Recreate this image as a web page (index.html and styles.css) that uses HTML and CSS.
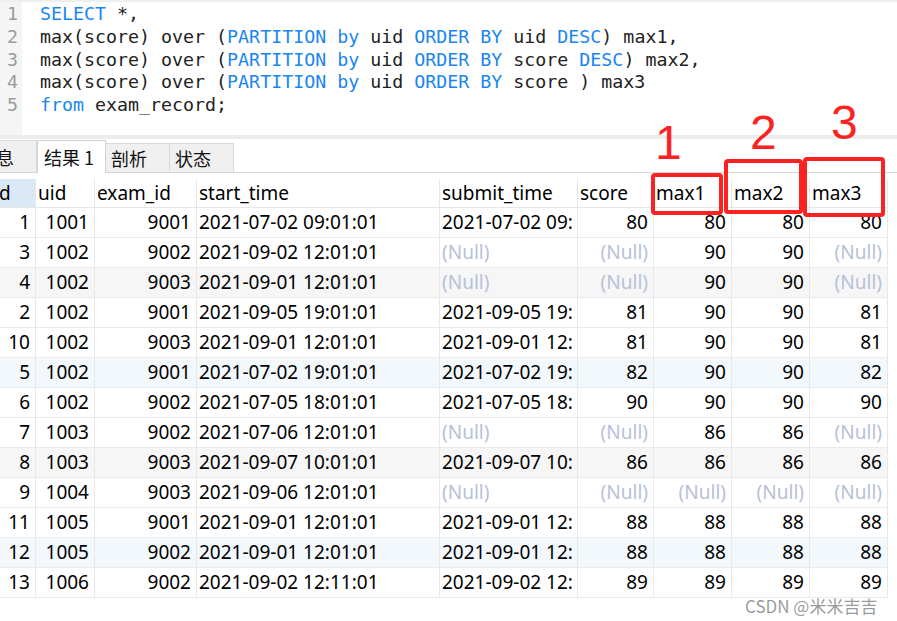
FILE: index.html
```html
<!DOCTYPE html>
<html lang="zh-CN">
<head>
<meta charset="utf-8">
<title>Navicat 查询结果</title>
<link rel="stylesheet" href="styles.css">
</head>
<body>
<div class="editor">
  <div class="gutter"><div>1</div><div>2</div><div>3</div><div>4</div><div>5</div></div>
  <div class="code"><div><span class="kw">SELECT</span> *,</div><div>max(score) over (<span class="kw">PARTITION</span> <span class="kw">by</span> uid <span class="kw">ORDER</span> <span class="kw">BY</span> uid <span class="kw">DESC</span>) max1,</div><div>max(score) over (<span class="kw">PARTITION</span> <span class="kw">by</span> uid <span class="kw">ORDER</span> <span class="kw">BY</span> score <span class="kw">DESC</span>) max2,</div><div>max(score) over (<span class="kw">PARTITION</span> <span class="kw">by</span> uid <span class="kw">ORDER</span> <span class="kw">BY</span> score ) max3</div><div><span class="kw">from</span> exam_record;</div></div>
</div>
<div class="sep"></div>
<div class="tabs">
  <div class="tab tab-first"><span>息</span></div>
  <div class="tab tab-active">结果 1</div>
  <div class="tab">剖析</div>
  <div class="tab">状态</div>
</div>
<div class="gap"></div>
<div class="grid">
  <div class="row head">
    <div class="c sel">d</div><div class="c">uid</div><div class="c">exam_id</div><div class="c">start_time</div><div class="c">submit_time</div><div class="c">score</div><div class="c">max1</div><div class="c">max2</div><div class="c">max3</div>
  </div>
  <div class="row">
    <div class="c r">1</div><div class="c r">1001</div><div class="c r">9001</div><div class="c">2021-07-02 09:01:01</div><div class="c">2021-07-02 09:</div><div class="c r">80</div><div class="c r">80</div><div class="c r">80</div><div class="c r">80</div>
  </div>
  <div class="row">
    <div class="c r">3</div><div class="c r">1002</div><div class="c r">9002</div><div class="c">2021-09-02 12:01:01</div><div class="c n">(Null)</div><div class="c r n">(Null)</div><div class="c r">90</div><div class="c r">90</div><div class="c r n">(Null)</div>
  </div>
  <div class="row gray">
    <div class="c r">4</div><div class="c r">1002</div><div class="c r">9003</div><div class="c">2021-09-01 12:01:01</div><div class="c n">(Null)</div><div class="c r n">(Null)</div><div class="c r">90</div><div class="c r">90</div><div class="c r n">(Null)</div>
  </div>
  <div class="row">
    <div class="c r">2</div><div class="c r">1002</div><div class="c r">9001</div><div class="c">2021-09-05 19:01:01</div><div class="c">2021-09-05 19:</div><div class="c r">81</div><div class="c r">90</div><div class="c r">90</div><div class="c r">81</div>
  </div>
  <div class="row">
    <div class="c r">10</div><div class="c r">1002</div><div class="c r">9003</div><div class="c">2021-09-01 12:01:01</div><div class="c">2021-09-01 12:</div><div class="c r">81</div><div class="c r">90</div><div class="c r">90</div><div class="c r">81</div>
  </div>
  <div class="row blue">
    <div class="c r">5</div><div class="c r">1002</div><div class="c r">9001</div><div class="c">2021-07-02 19:01:01</div><div class="c">2021-07-02 19:</div><div class="c r">82</div><div class="c r">90</div><div class="c r">90</div><div class="c r">82</div>
  </div>
  <div class="row">
    <div class="c r">6</div><div class="c r">1002</div><div class="c r">9002</div><div class="c">2021-07-05 18:01:01</div><div class="c">2021-07-05 18:</div><div class="c r">90</div><div class="c r">90</div><div class="c r">90</div><div class="c r">90</div>
  </div>
  <div class="row">
    <div class="c r">7</div><div class="c r">1003</div><div class="c r">9002</div><div class="c">2021-07-06 12:01:01</div><div class="c n">(Null)</div><div class="c r n">(Null)</div><div class="c r">86</div><div class="c r">86</div><div class="c r n">(Null)</div>
  </div>
  <div class="row gray">
    <div class="c r">8</div><div class="c r">1003</div><div class="c r">9003</div><div class="c">2021-09-07 10:01:01</div><div class="c">2021-09-07 10:</div><div class="c r">86</div><div class="c r">86</div><div class="c r">86</div><div class="c r">86</div>
  </div>
  <div class="row">
    <div class="c r">9</div><div class="c r">1004</div><div class="c r">9003</div><div class="c">2021-09-06 12:01:01</div><div class="c n">(Null)</div><div class="c r n">(Null)</div><div class="c r n">(Null)</div><div class="c r n">(Null)</div><div class="c r n">(Null)</div>
  </div>
  <div class="row">
    <div class="c r">11</div><div class="c r">1005</div><div class="c r">9001</div><div class="c">2021-09-01 12:01:01</div><div class="c">2021-09-01 12:</div><div class="c r">88</div><div class="c r">88</div><div class="c r">88</div><div class="c r">88</div>
  </div>
  <div class="row blue">
    <div class="c r">12</div><div class="c r">1005</div><div class="c r">9002</div><div class="c">2021-09-01 12:01:01</div><div class="c">2021-09-01 12:</div><div class="c r">88</div><div class="c r">88</div><div class="c r">88</div><div class="c r">88</div>
  </div>
  <div class="row">
    <div class="c r">13</div><div class="c r">1006</div><div class="c r">9002</div><div class="c">2021-09-02 12:11:01</div><div class="c">2021-09-02 12:</div><div class="c r">89</div><div class="c r">89</div><div class="c r">89</div><div class="c r">89</div>
  </div>
</div>

<div class="box box1"></div>
<div class="box box2"></div>
<div class="box box3"></div>
<div class="num num1">1</div>
<div class="num num2">2</div>
<div class="num num3">3</div>
<div class="watermark">CSDN @米米吉吉</div>
</body>
</html>
```
FILE: styles.css
```css
html, body {
  margin: 0;
  padding: 0;
}
body {
  width: 897px;
  height: 621px;
  overflow: hidden;
  position: relative;
  background: #ffffff;
  font-family: "Noto Sans", "Noto Sans CJK SC", sans-serif;
  color: #000;
}

/* SQL editor */
.editor {
  display: flex;
  height: 135px;
  box-sizing: border-box;
  border-top: 2px solid #efefef;
}
.gutter {
  width: 22px;
  box-sizing: border-box;
  background: #f5f5f5;
  padding: 1px 4px 0 0;
  text-align: right;
  font: 18.3px/22.8px "DejaVu Sans Mono", monospace;
  color: #9b9b9b;
}
.code {
  flex: 1;
  padding: 1px 0 0 18px;
  font: 18.3px/22.8px "DejaVu Sans Mono", monospace;
  color: #222;
  white-space: pre;
}
.kw {
  color: #1a86f0;
}

.sep {
  height: 4px;
  background: #ececec;
}

/* Tabs */
.tabs {
  height: 33px;
  display: flex;
  align-items: flex-end;
  border-bottom: 1px solid #d6d6d6;
}
.tab {
  box-sizing: border-box;
  height: 29px;
  width: 64px;
  background: #f0f0f0;
  border-right: 1px solid #d9d9d9;
  border-top: 1px solid #d9d9d9;
  padding-left: 5px;
  display: flex;
  align-items: center;
  font: 18px/1 "Noto Sans CJK SC", sans-serif;
  color: #111;
  white-space: nowrap;
  overflow: hidden;
}
.tab-first {
  width: 37px;
  height: 32px;
  padding-left: 0;
}
.tab-first span {
  margin-left: -4px;
}
.tab-active {
  width: 69px;
  height: 33px;
  margin-bottom: -1px;
  background: #ffffff;
  border-left: 1px solid #d2d2d2;
  border-top: 1px solid #d2d2d2;
  border-right: 1px solid #d2d2d2;
  padding-left: 6px;
  padding-bottom: 1px;
}

.gap {
  height: 6px;
}

/* Result grid */
.grid {
  width: 888px;
}
.row {
  display: grid;
  grid-template-columns: 36px 59px 102px 243px 138px 76px 78px 78px 78px;
  height: 30px;
  box-sizing: border-box;
  border-bottom: 1px solid #ebebeb;
  font-size: 19px;
  line-height: 29px;
}
.row.head {
  height: 29px;
  line-height: 28px;
  border-bottom-color: #e6e6e6;
}
.row.gray {
  background: #f6f6f6;
}
.row.blue {
  background: #f3f8fd;
}
.c {
  box-sizing: border-box;
  border-right: 1px solid #e8e8e8;
  padding: 0 5px 0 2px;
  white-space: nowrap;
  overflow: hidden;
}
.c.r {
  text-align: right;
}
.c.n {
  color: #b6c1d9;
}
.c.sel {
  background: #dbe8f6;
  text-indent: -3px;
}

/* Annotation overlays */
.box {
  position: absolute;
  box-sizing: border-box;
  border: 4px solid #fc2222;
  border-radius: 4px;
}
.box1 {
  left: 651px;
  top: 173px;
  width: 72px;
  height: 42px;
}
.box2 {
  left: 724px;
  top: 159px;
  width: 79px;
  height: 55px;
}
.box3 {
  left: 803px;
  top: 157px;
  width: 82px;
  height: 60px;
}
.num {
  position: absolute;
  font: 48px/48px "Liberation Sans", sans-serif;
  color: #fc2222;
}
.num1 {
  left: 655px;
  top: 119px;
}
.num2 {
  left: 750px;
  top: 109px;
}
.num3 {
  left: 831px;
  top: 99px;
}
.watermark {
  position: absolute;
  left: 745px;
  top: 597px;
  font: 17px/1 "Noto Sans CJK SC", sans-serif;
  color: rgba(120, 120, 120, 0.75);
  white-space: nowrap;
}
```
